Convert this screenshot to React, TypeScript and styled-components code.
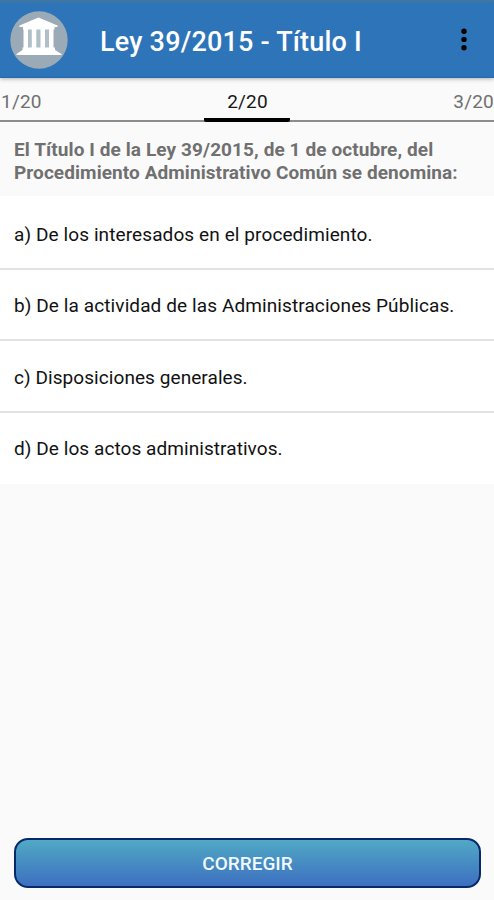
import React from "react";
import styled, { createGlobalStyle } from "styled-components";

const GlobalStyle = createGlobalStyle`
  * { box-sizing: border-box; }
  body { margin: 0; background: #fafafa; font-family: Roboto, sans-serif; }
`;

const Screen = styled.div`
  display: flex;
  flex-direction: column;
  height: 900px;
  overflow: hidden;
  background: #fafafa;
`;

const AppBar = styled.header`
  display: flex;
  align-items: center;
  flex: none;
  height: 78px;
  padding: 2px 20px 0 10px;
  background: linear-gradient(#41799f 0, #2d74b9 4px, #2d74b9 76px, #2468a6 78px);
  box-shadow: 0 1px 4px rgba(0, 0, 0, 0.3);
  z-index: 1;
`;

const Title = styled.h1`
  flex: 1;
  margin: 4px 0 0 32px;
  font-size: 27px;
  line-height: 32px;
  font-weight: 500;
  letter-spacing: 0.2px;
  color: #fff;
  white-space: nowrap;
`;

const MenuButton = styled.button`
  display: flex;
  padding: 0;
  border: 0;
  background: none;
`;

const Tabs = styled.nav`
  display: grid;
  grid-template-columns: 1fr auto 1fr;
  flex: none;
  height: 44px;
  border-bottom: 2px solid #8c8c8c;
`;

const Tab = styled.div<{ $active?: boolean; $align?: string }>`
  display: flex;
  justify-content: ${(p) => p.$align ?? "center"};
  width: ${(p) => (p.$active ? "86px" : "auto")};
  height: 44px;
  padding: 12px 0 0 1px;
  border-bottom: ${(p) => (p.$active ? "4px solid #000" : "0")};
  border-radius: 2px;
  font-size: 19px;
  line-height: 24px;
  letter-spacing: 0.2px;
  color: ${(p) => (p.$active ? "#161616" : "#707070")};
`;

const Question = styled.h2`
  flex: none;
  height: 74px;
  margin: 0;
  padding: 16px 14px 0;
  font-size: 19px;
  line-height: 23px;
  font-weight: 700;
  color: #707070;
  white-space: nowrap;
`;

const Answers = styled.ul`
  flex: none;
  margin: 0;
  padding: 0 0 2px;
  list-style: none;
  background: #fff;
`;

const Answer = styled.li`
  display: flex;
  align-items: center;
  height: 71.5px;
  padding: 3px 14px 0;
  font-size: 19px;
  color: #111;
  white-space: nowrap;
  & + & { border-top: 2px solid #e2e2e2; }
  &:first-child { padding-top: 6px; }
`;

const Line = styled.span<{ $spacing: number }>`
  display: block;
  letter-spacing: ${(p) => p.$spacing}px;
`;

const Footer = styled.footer`
  margin-top: auto;
  padding: 0 13px 12px 14px;
`;

const SubmitButton = styled.button`
  display: block;
  width: 100%;
  height: 50px;
  padding: 0;
  border: 2px solid #08286a;
  border-radius: 14px;
  background: linear-gradient(#50a9c5, #3d6fc0);
  color: #f1faff;
  font: 500 19px Roboto, sans-serif;
`;

const Logo = () => (
  <svg width="58" height="58" viewBox="0 0 58 58" aria-hidden="true">
    <circle cx="29" cy="29" r="28.7" fill="#9aabb7" />
    <path fill="#c9d6df" d="M14 18H43V38H14Z" opacity="0.45" />
    <path
      fill="#fff"
      d="M28.5 6.5 47.5 14.5V16H9.5V14.5ZM13 16H44.5V18.5H13ZM13.5 18.5H18V37H13.5ZM21.8 18.5H26.3V37H21.8ZM30.5 18.5H35V37H30.5ZM39 18.5H43.5V37H39ZM12.5 36.5H45V39L51.5 43V44H6.5V43L12.5 39Z"
    />
  </svg>
);

const MoreIcon = () => (
  <svg width="20" height="28" viewBox="0 0 20 28" aria-hidden="true">
    <circle cx="10" cy="5.2" r="2.7" />
    <circle cx="10" cy="13.4" r="2.7" />
    <circle cx="10" cy="21.8" r="2.7" />
  </svg>
);

const answers = [
  { text: "a) De los interesados en el procedimiento.", spacing: 0.1 },
  { text: "b) De la actividad de las Administraciones Públicas.", spacing: 0.1 },
  { text: "c) Disposiciones generales.", spacing: 0.07 },
  { text: "d) De los actos administrativos.", spacing: 0.07 },
];

export default function App() {
  return (
    <Screen>
      <GlobalStyle />
      <AppBar>
        <Logo />
        <Title>Ley 39/2015 - Título I</Title>
        <MenuButton aria-label="Más opciones">
          <MoreIcon />
        </MenuButton>
      </AppBar>
      <Tabs>
        <Tab $align="flex-start">1/20</Tab>
        <Tab $active>2/20</Tab>
        <Tab $align="flex-end">3/20</Tab>
      </Tabs>
      <Question>
        <Line $spacing={0.09}>El Título I de la Ley 39/2015, de 1 de octubre, del</Line>
        <Line $spacing={0.08}>Procedimiento Administrativo Común se denomina:</Line>
      </Question>
      <Answers>
        {answers.map((a) => (
          <Answer key={a.text}>
            <Line $spacing={a.spacing}>{a.text}</Line>
          </Answer>
        ))}
      </Answers>
      <Footer>
        <SubmitButton>CORREGIR</SubmitButton>
      </Footer>
    </Screen>
  );
}
